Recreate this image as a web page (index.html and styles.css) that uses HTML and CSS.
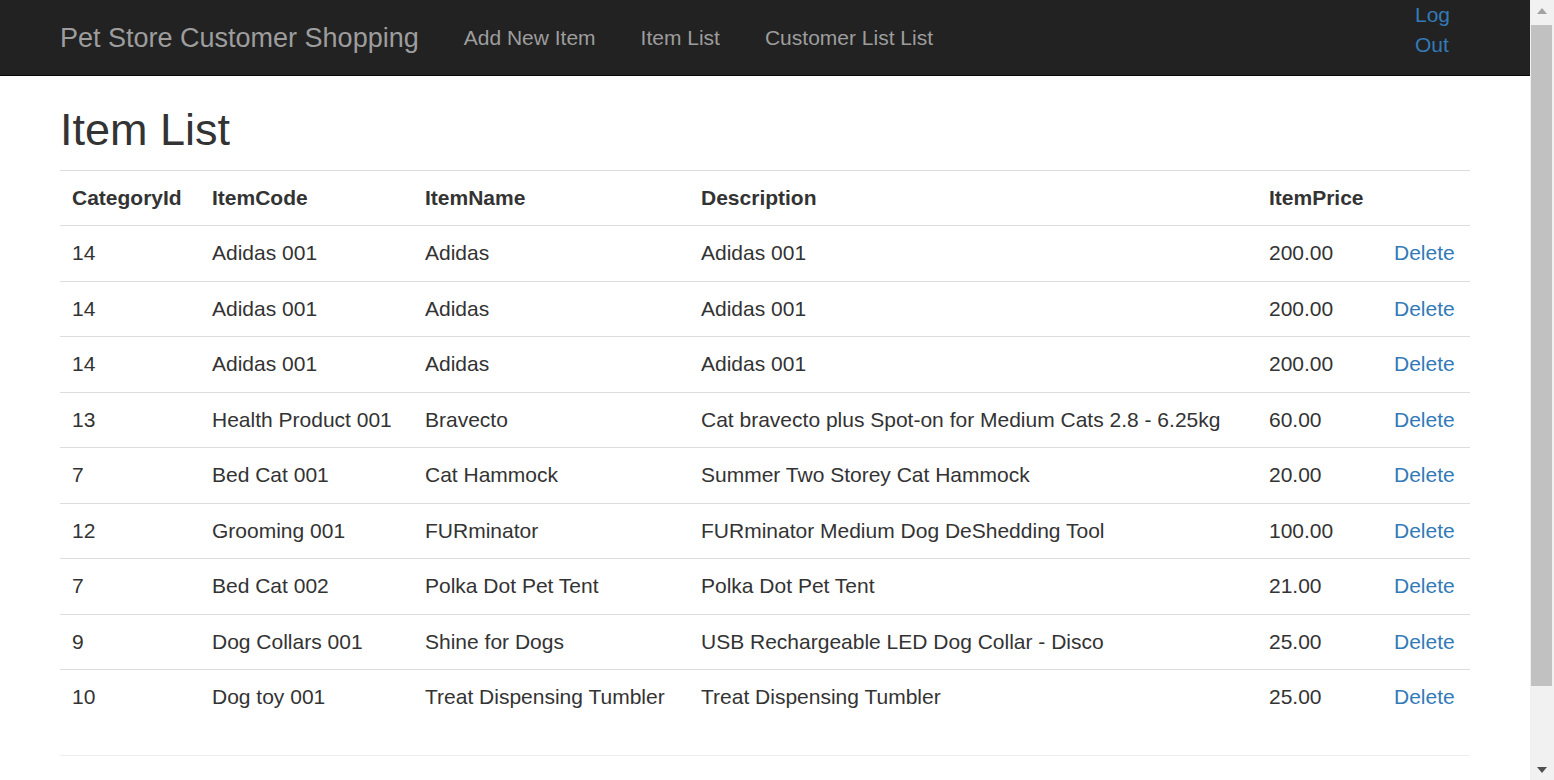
FILE: index.html
```html
<!DOCTYPE html>
<html lang="en">
<head>
<meta charset="utf-8">
<title>Item List - Pet Store</title>
<link rel="stylesheet" href="styles.css">
</head>
<body>
<div class="app">
  <header class="navbar">
    <div class="nav-inner">
      <a class="brand" href="#">Pet Store Customer Shopping</a>
      <ul class="nav-links">
        <li><a href="#">Add New Item</a></li>
        <li><a href="#">Item List</a></li>
        <li><a href="#">Customer List List</a></li>
      </ul>
      <a class="logout" href="#">Log Out</a>
    </div>
  </header>
  <main class="page">
    <h2 class="title">Item List</h2>
    <table class="table">
      <colgroup>
        <col class="c-cat"><col class="c-code"><col class="c-name"><col class="c-desc"><col class="c-price"><col class="c-act">
      </colgroup>
      <tbody>
        <tr><th>CategoryId</th><th>ItemCode</th><th>ItemName</th><th>Description</th><th>ItemPrice</th><th></th></tr>
        <tr><td>14</td><td>Adidas 001</td><td>Adidas</td><td>Adidas 001</td><td>200.00</td><td><a href="#">Delete</a></td></tr>
        <tr><td>14</td><td>Adidas 001</td><td>Adidas</td><td>Adidas 001</td><td>200.00</td><td><a href="#">Delete</a></td></tr>
        <tr><td>14</td><td>Adidas 001</td><td>Adidas</td><td>Adidas 001</td><td>200.00</td><td><a href="#">Delete</a></td></tr>
        <tr><td>13</td><td>Health Product 001</td><td>Bravecto</td><td>Cat bravecto plus Spot-on for Medium Cats 2.8 - 6.25kg</td><td>60.00</td><td><a href="#">Delete</a></td></tr>
        <tr><td>7</td><td>Bed Cat 001</td><td>Cat Hammock</td><td>Summer Two Storey Cat Hammock</td><td>20.00</td><td><a href="#">Delete</a></td></tr>
        <tr><td>12</td><td>Grooming 001</td><td>FURminator</td><td>FURminator Medium Dog DeShedding Tool</td><td>100.00</td><td><a href="#">Delete</a></td></tr>
        <tr><td>7</td><td>Bed Cat 002</td><td>Polka Dot Pet Tent</td><td>Polka Dot Pet Tent</td><td>21.00</td><td><a href="#">Delete</a></td></tr>
        <tr><td>9</td><td>Dog Collars 001</td><td>Shine for Dogs</td><td>USB Rechargeable LED Dog Collar - Disco</td><td>25.00</td><td><a href="#">Delete</a></td></tr>
        <tr><td>10</td><td>Dog toy 001</td><td>Treat Dispensing Tumbler</td><td>Treat Dispensing Tumbler</td><td>25.00</td><td><a href="#">Delete</a></td></tr>
      </tbody>
    </table>
    <hr class="rule">
    <footer class="footer"></footer>
  </main>
</div>
<div class="scrollbar" aria-hidden="true">
  <div class="sb-btn"><span class="arrow-up"></span></div>
  <div class="sb-track"><div class="sb-thumb"></div></div>
  <div class="sb-btn"><span class="arrow-down"></span></div>
</div>
</body>
</html>
```
FILE: styles.css
```css
body {
  margin: 0;
  display: flex;
  align-items: flex-start;
  font-family: "Liberation Sans", Arial, Helvetica, sans-serif;
  font-size: 21px;
  line-height: 30px;
  color: #333;
  background: #fff;
}
a {
  color: #337ab7;
  text-decoration: none;
}
.app {
  flex: 1;
  min-width: 0;
}

/* navbar */
.navbar {
  background: #222;
  border-bottom: 1px solid #080808;
  height: 76px;
  box-sizing: border-box;
}
.nav-inner {
  width: 1455px;
  margin: 0 auto;
  padding: 0 22.5px;
  box-sizing: border-box;
  display: flex;
  align-items: flex-start;
}
.brand {
  margin-left: -22.5px;
  padding: 22.5px;
  font-size: 27px;
  line-height: 30px;
  color: #9d9d9d;
  white-space: nowrap;
}
.nav-links {
  list-style: none;
  margin: 0;
  padding: 0;
  display: flex;
}
.nav-links a {
  display: block;
  padding: 22.5px;
  color: #9d9d9d;
  white-space: nowrap;
}
.logout {
  margin-left: auto;
  width: 55px;
  line-height: 30px;
  color: #337ab7;
}

/* page */
.page {
  width: 1455px;
  margin: 0 auto;
  padding: 0 22.5px;
  box-sizing: border-box;
}
.title {
  margin: 29px 0 15px;
  font-size: 45px;
  line-height: 49.5px;
  font-weight: 400;
  color: #333;
}
.table {
  width: 100%;
  table-layout: fixed;
  border-collapse: collapse;
  margin-bottom: 30px;
}
.table th,
.table td {
  padding: 12.25px 12px;
  line-height: 30px;
  border-top: 1px solid #ddd;
  text-align: left;
  vertical-align: top;
  white-space: nowrap;
}
.table th {
  font-weight: bold;
}
.c-cat { width: 140px; }
.c-code { width: 213px; }
.c-name { width: 276px; }
.c-desc { width: 568px; }
.c-price { width: 125px; }
.c-act { width: 88px; }

.rule {
  margin: 30px 0 0;
  border: 0;
  border-top: 1px solid #eee;
}
.footer {
  height: 100px;
}

/* drawn scrollbar */
.scrollbar {
  position: sticky;
  top: 0;
  flex: 0 0 24px;
  height: 780px;
  background: #f1f1f1;
  display: flex;
  flex-direction: column;
}
.sb-btn {
  height: 24px;
  display: flex;
  align-items: center;
  justify-content: center;
}
.arrow-up {
  width: 0;
  height: 0;
  border-left: 5.5px solid transparent;
  border-right: 5.5px solid transparent;
  border-bottom: 6px solid #a3a3a3;
  margin: 0 1px 3px 0;
}
.arrow-down {
  width: 0;
  height: 0;
  border-left: 5.5px solid transparent;
  border-right: 5.5px solid transparent;
  border-top: 6px solid #505050;
  margin: 3px 1px 0 0;
}
.sb-track {
  flex: 1;
  padding: 1px 2px 0 1px;
}
.sb-thumb {
  height: 661px;
  background: #c1c1c1;
}
```
